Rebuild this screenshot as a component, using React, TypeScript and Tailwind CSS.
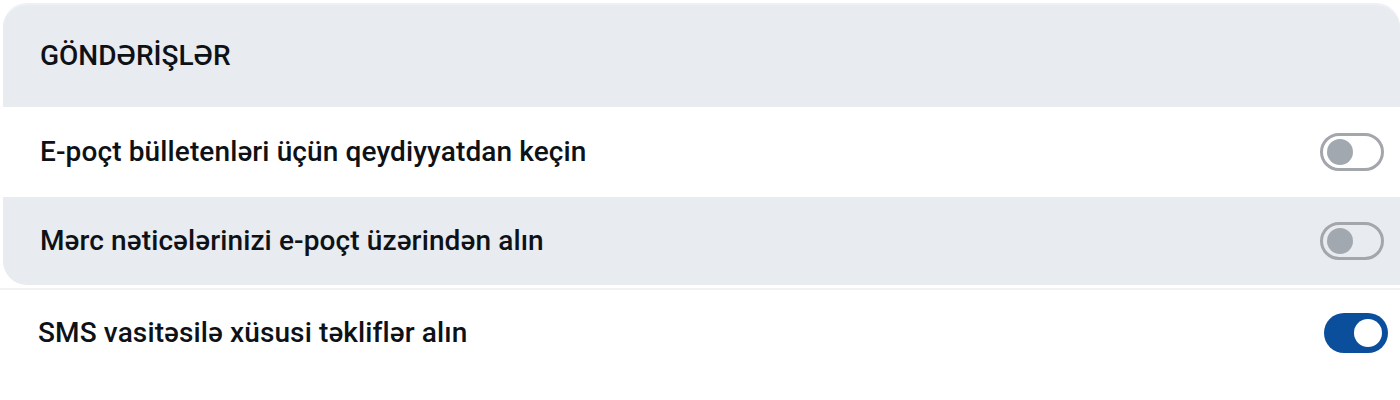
import { useState } from 'react';

interface Pref {
  id: string;
  label: string;
  on: boolean;
}

const initial: Pref[] = [
  { id: 'newsletter', label: 'E-poçt bülletenləri üçün qeydiyyatdan keçin', on: false },
  { id: 'results', label: 'Mərc nəticələrinizi e-poçt üzərindən alın', on: false },
  { id: 'sms', label: 'SMS vasitəsilə xüsusi təkliflər alın', on: true },
];

function Toggle({ on, onClick }: { on: boolean; onClick: () => void }) {
  return (
    <button
      type="button"
      onClick={onClick}
      className={
        on
          ? 'flex h-[40px] w-[64px] items-center justify-end rounded-full bg-[#0b4f9c] pr-[6px]'
          : 'flex h-[38px] w-[64px] items-center justify-start rounded-full border-[3px] border-[#a3a7ac] pl-[4px]'
      }
    >
      <span
        className={
          on
            ? 'block h-[28px] w-[28px] rounded-full bg-white'
            : 'block h-[26px] w-[26px] rounded-full bg-[#a2a8af]'
        }
      />
    </button>
  );
}

export default function App() {
  const [prefs, setPrefs] = useState(initial);
  const flip = (id: string) =>
    setPrefs((p) => p.map((x) => (x.id === id ? { ...x, on: !x.on } : x)));

  const row = (p: Pref, cls: string) => (
    <div key={p.id} className={`flex items-center justify-between ${cls}`}>
      <span className="text-[28px] font-medium tracking-[0.12px] text-[#0e1115]">{p.label}</span>
      <Toggle on={p.on} onClick={() => flip(p.id)} />
    </div>
  );

  return (
    <div className="h-[400px] w-[1400px] bg-white pt-[3px]" style={{ fontFamily: 'Roboto, "Noto Sans", sans-serif' }}>
      <div className="ml-[3px] overflow-hidden rounded-t-[24px] rounded-bl-[24px] border-t-2 border-[#eef0f3] bg-white">
        <div className="flex h-[102px] items-center bg-[#e8ebef] pl-[37px]">
          <h2 className="text-[28px] font-medium text-[#0e1115]">GÖNDƏRİŞLƏR</h2>
        </div>
        {row(prefs[0], 'h-[90px] bg-white pl-[37px] pr-[16px]')}
        {row(prefs[1], 'h-[88px] bg-[#e8ebef] pl-[37px] pr-[16px]')}
      </div>
      <div className="mt-[3px] border-t-2 border-[#f0f2f4]">
        {row(prefs[2], 'h-[86px] bg-white pl-[38px] pr-[12px]')}
      </div>
    </div>
  );
}
